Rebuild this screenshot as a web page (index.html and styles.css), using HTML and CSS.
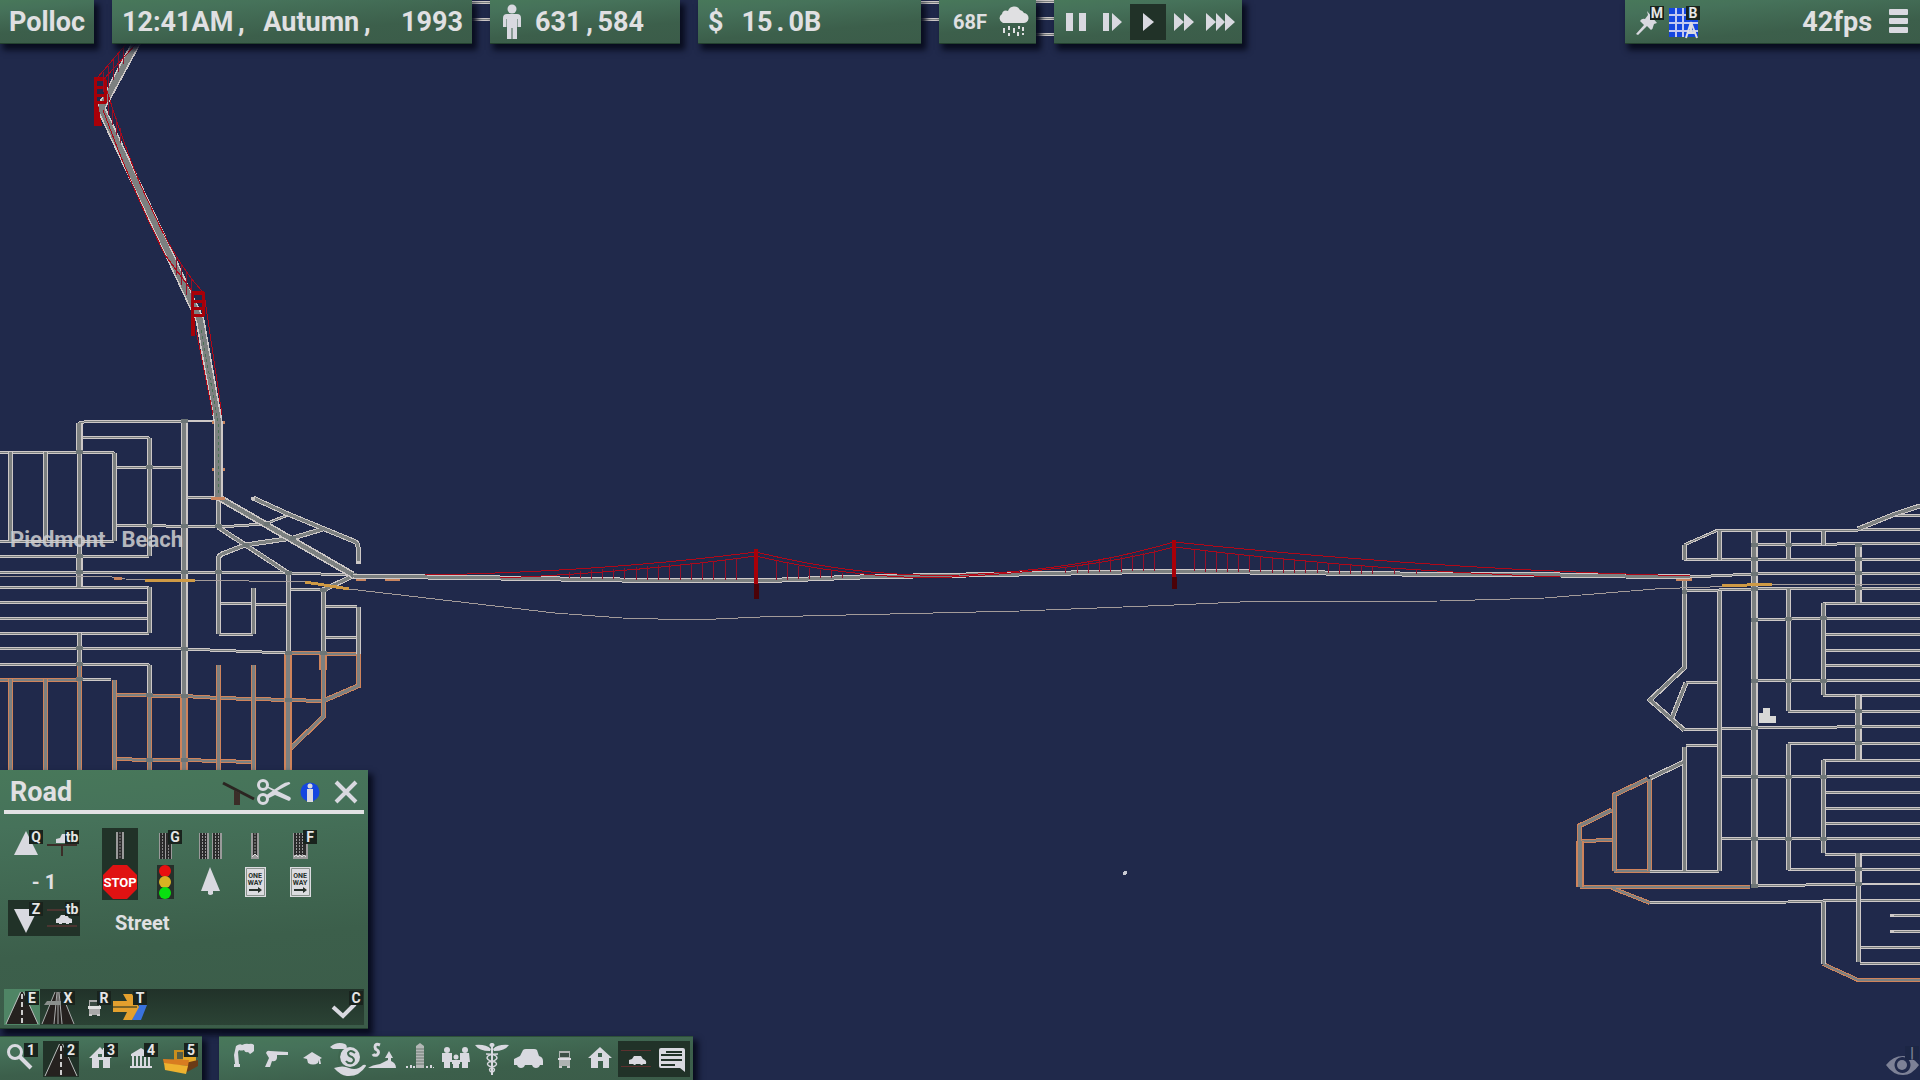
FILE: index.html
```html
<!DOCTYPE html>
<html lang="en">
<head>
<meta charset="utf-8">
<title>Polloc</title>
<link rel="stylesheet" href="styles.css">
</head>
<body>
<svg class="map" viewBox="0 0 1920 1080" preserveAspectRatio="xMidYMid slice" aria-hidden="true">
  <defs>
    <!-- east-west streets -->
    <path id="rows" d="M79 424Q79 422 84 422L184 421H218 M79 437H146Q149 437 149 440 M0 452H111Q114 452 114 455 M114 467H184 M184 497H218 M114 525L218 527L265 524L288 515 M0 541H114 M0 556H149 M0 572H184L288 573L353 575H380 M0 587H149 M0 602H149 M0 618H149 M0 633H149 M0 648L184 649L288 653 M0 664H146Q149 664 149 667 M79 679H111 M219 603L288 605 M219 634H253 M288 589L323 590 M323 606L357 607 M323 637L357 638
      M1684 545L1718 530H1858L1920 529 M1754 545L1920 543 M1684 560L1920 559 M1690 577L1754 574L1920 573 M1684 591L1754 589L1920 588 M1823 604L1920 603 M1754 620L1823 618H1920 M1823 634H1920 M1823 650H1920 M1823 665H1920 M1754 681L1920 680 M1823 695H1920 M1788 711H1920 M1684 730L1754 728L1920 726 M1788 744L1920 743 M1686 683L1719 682 M1686 746L1719 745 M1895 515H1920
      M1823 760H1920 M1719 777L1920 776 M1823 792H1920 M1823 808H1920 M1823 823H1920 M1719 839L1920 838 M1825 854H1920 M1788 870L1920 869 M1754 886L1858 884H1920 M1650 903L1788 902L1858 900H1920 M1892 915H1920 M1892 931H1920 M1858 947H1920 M1860 963H1920 M1650 871H1719
      M466 2H500 M466 19H500 M915 2H945 M915 19H945 M1030 1H1060 M1030 18H1060 M1030 34H1060"/>
    <!-- north-south streets -->
    <path id="cols" d="M10 452V541 M45 452V541 M79 423V587 M79 633V664 M114 453V541 M149 438V556 M149 587V633 M149 665V695 M218 497V527 M218 634V560Q218 556 222 554L245 545L293 538L323 529 M253 588V634 M288 573V653 M323 590V653 M358 607V654 M253 498L288 514L356 542Q358 544 358 547V562 M353 576L323 590 M218 527L288 573
      M1684 560V545 M1684 577V668L1650 700L1684 730 M1686 683L1672 718 M1719 531V560 M1719 591V871 M1788 531V559 M1788 589V711 M1823 531V545 M1823 603V695 M1684 747V871 M1788 744V870 M1823 760V853 M1858 853V962 M1823 902V964 M1858 529L1895 514L1920 506 M1684 762L1650 778"/>
    <path id="avenues" d="M184 421V695 M1754 531V886 M1858 545V603 M1858 695V760 M1858 853V886 M218 497L353 575 M79 423V452 M79 556V587"/>
    <path id="hot" d="M10 664V770 M45 664V770 M79 664V770 M114 680V770 M149 695V770 M218 665V770 M253 665V770 M323 653V717L291 748 M358 654V686L323 701 M1649 779V871 M1648 779L1614 795V871 M1612 810L1579 826V841"/>
    <path id="hot-rows" d="M0 680H80 M114 695L184 696L218 698L253 699L323 701 M114 759L150 760H184L253 762 M288 653L358 654 M1579 841L1614 840 M1614 871H1650 M1580 887H1750 M1612 888L1650 903 M1823 964L1858 980H1920"/>
    <path id="hot-avenues" d="M184 696V770 M288 653V770 M323 655V670 M1580 841V887"/>
    <path id="deck" d="M353 576L500 578L620 580L756 581L860 577L1020 574L1174 571L1400 574L1560 575L1690 577"/>
    <path id="span" d="M140 36L101 108L200 320L218 421V497"/>
    <clipPath id="south"><path d="M0 679H400V1080H0zM1500 0H1920V1080H1500zM200 640H400V680H200zM60 664H90V680H60z"/></clipPath>
  </defs>

  <use href="#hot-rows" class="edge-hot w4"/><use href="#hot-rows" class="core w2"/>
  <g clip-path="url(#south)"><use href="#hot" class="edge-hot w5"/><use href="#hot" class="core w3"/></g>
  <use href="#hot-avenues" class="edge-hot w8"/><use href="#hot-avenues" class="core w4"/>
  <use href="#rows" class="edge w3"/><use href="#rows" class="core w1"/>
  <use href="#cols" class="edge w5"/><use href="#cols" class="core w3"/>
  <use href="#avenues" class="edge w7"/><use href="#avenues" class="core w4"/>
  <path class="joint" d="M76 452h7M76 556h7M76 572h7M76 648h7M76 664h7M76 679h7M146 467h7M146 526h7M146 695h7M181 421h7M181 526h7M181 572h7M181 649h7M181 696h7M181 760h7M146 760h7M215 526h7M215 572h7M285 573h7M285 653h7M285 700h7M320 590h7M320 653h7M243 545h6M290 538h6M264 524h6M351 575h6M1751 545h7M1751 559h7M1751 574h7M1751 589h7M1751 620h7M1751 681h7M1751 728h7M1751 777h7M1751 839h7M1751 886h7M1785 545h7M1785 619h7M1785 681h7M1785 777h7M1785 839h7M1820 618h7M1820 681h7M1820 777h7M1820 839h7M1855 545h7M1855 559h7M1855 573h7M1855 588h7M1855 711h7M1855 727h7M1855 743h7M1855 869h7M1855 884h7M1682 592h5"/>
  <path class="edge w3" d="M251 498h4 M356 562h5 M1890 915h4 M1890 931h4"/>

  <!-- rail line and stations -->
  <path class="rail" d="M0 576H105L125 579L310 582L349 589L555 613L622 618L694 620L760 617L1020 611L1174 605L1240 602L1440 601L1545 598L1655 589L1680 588L1770 585L1920 584"/>
  <path class="station" d="M145 580H195 M305 582L349 589 M1722 586L1772 584"/>
  <path class="pad" d="M212 422H225 M212 469H225 M211 498H225 M356 579H366 M385 579H400 M114 578H122 M1676 579H1692"/>

  <!-- northern bridge -->
  <use href="#span" class="edge w9"/><use href="#span" class="core w6"/>
  <path class="stripe" d="M201 330L218 421V495"/>
  <rect class="tower" x="94" y="77" width="12" height="4"/>
  <path class="truss" d="M95 79V125 M105 80V103 M94 87H106 M94 95H106 M94 102H106 M192 292V335 M203 292V316 M192 301H204 M192 308H204 M192 315H204"/>
  <path class="tower" d="M94 104h4l4 22h-8zM191 291h13v4h-13zM191 318h4v18h-4z"/>
  <path class="cable" d="M98 77L128 42 M103 80L136 44 M107 91Q132 170 150 205Q175 262 202 291 M103 110Q130 185 165 255L192 291 M205 300L222 415 M196 330L213 415"/>
  <path class="hanger" d="M103 72V92M108 66V88M113 60V80M118 54V72M123 48V64M108 97V115M112 107V125M116 118V135M120 128V143M176 258V275M181 265V285M186 272V295M191 278V300"/>

  <!-- long crossing -->
  <use href="#deck" class="edge w5"/><use href="#deck" class="core w3"/>
  <path class="cable" d="M425 575Q600 572 756 552Q860 578 960 575Q1080 570 1174 542Q1440 570 1690 576 M500 578Q640 572 756 556Q840 576 930 578Q1080 572 1174 547Q1360 570 1560 577"/>
  <path class="hanger" d="M569 572V578M580 571V578M591 570V579M602 569V579M613 569V579M624 568V579M636 567V580M647 566V580M658 565V580M669 564V580M680 564V580M691 563V580M702 562V580M713 561V580M725 559V580M736 558V580M776 561V580M787 563V580M798 566V579M809 568V579M820 570V578M831 571V578M842 573V578M1065 567V573M1077 565V573M1088 562V573M1099 560V572M1110 558V572M1121 557V572M1132 555V571M1143 553V571M1154 550V571M1194 550V571M1205 551V572M1216 552V572M1227 553V572M1238 554V572M1249 556V572M1260 557V572M1272 558V573M1283 559V573M1294 560V573M1305 561V573M1317 562V573M1328 563V573M1339 564V574M1350 565V574M1361 566V574M1372 567V574M1394 569V574M1416 570V574"/>
  <path class="tower" d="M754 549h4v35h-4zM1172 540h4v40h-4z"/>
  <path class="pier" d="M754 584h5v15h-5zM1172 577h5v12h-5z"/>

  <path class="block" d="M1763 708h7v8h6v7h-17v-10h4z"/>
  <circle class="dot" cx="1125" cy="873" r="2"/>
</svg>

<div class="hud">
  <header class="topbar">
    <div class="plate city">Polloc</div>
    <div class="plate date"><span>12:41AM<span class="mark">,</span></span><span>Autumn<span class="mark">,</span></span><span class="year">1993</span></div>
    <div class="plate people">
      <svg class="person" viewBox="0 0 20 36" aria-hidden="true"><circle cx="10" cy="5" r="4.500"/><path d="M5 10h10q4 0 4 4v9h-3.500v-8h-.500v20h-4.500V24h-1v11H5V15h-.500v8H1v-9q0-4 4-4z"/></svg>
      <span>631<span class="mark">,</span>584</span>
    </div>
    <div class="plate money"><span>$</span><span>15<span class="mark">.</span>0B</span></div>
    <div class="plate weather">
      <span>68F</span>
      <svg class="icon" viewBox="0 0 36 36" aria-hidden="true"><path d="M7 19a5 5 0 0 1-1-9a4 4 0 0 1 6-3a6.500 6.500 0 0 1 12-1a6 6 0 0 1 4 3a5 5 0 0 1-1 10z"/><path d="M8 24v5M13 22v4M13 29v3M18 24v5M23 22v3M22 28v4M27 23v4M27 29v2" stroke="currentColor" stroke-width="2"/></svg>
    </div>
    <div class="plate speed">
      <button class="tool" aria-label="Pause"><svg viewBox="0 0 36 36"><path d="M8 9h7v18H8zM21 9h7v18h-7z"/></svg></button>
      <button class="tool" aria-label="Slow"><svg viewBox="0 0 36 36"><path d="M9 9h6v18H9zM18 9l10 9l-10 9z"/></svg></button>
      <button class="tool on" aria-label="Play"><svg viewBox="0 0 36 36"><path d="M13 9l11 9l-11 9z"/></svg></button>
      <button class="tool" aria-label="Fast"><svg viewBox="0 0 36 36"><path d="M8 9l10 9l-10 9zM18 9l10 9l-10 9z"/></svg></button>
      <button class="tool" aria-label="Fastest"><svg viewBox="0 0 36 36"><path d="M4 9l10 9l-10 9zM14 9l9 9l-9 9zM23 9l10 9l-10 9z"/></svg></button>
    </div>
    <div class="plate system">
      <button class="tool" aria-label="Pin"><svg viewBox="0 0 36 36"><path d="M18 7l10 12l-3 1l-1 3q0 2-2 3l-4-4l-9 9l-2-1l8-9l-4-4q2-3 5-2l3-4z"/></svg><kbd>M</kbd></button>
      <button class="tool" aria-label="Blueprint"><svg viewBox="0 0 36 36"><path fill="#1546e0" d="M4 4h29v29H4z"/><path fill="none" stroke="#c3c8f0" stroke-width="2" d="M4 11h29M4 19h29M4 27h29M11 4v29M18 4v29"/><path fill="none" stroke="#dcdce2" stroke-width="2" d="M26 18l-5 16M26 18l6 16M22 29h9M26 18v10"/></svg><kbd>B</kbd></button>
      <span class="fps">42fps</span>
      <button class="tool" aria-label="Menu"><svg viewBox="0 0 36 36"><rect x="9" y="5" width="19" height="6" rx="1"/><rect x="9" y="14" width="19" height="6" rx="1"/><rect x="9" y="23" width="19" height="6" rx="1"/></svg></button>
    </div>
  </header>

  <main class="field"><span class="district"><span>Piedmont</span><span>Beach</span></span></main>

  <section class="plate panel" aria-label="Road">
    <div class="title">
      <h1>Road</h1>
      <button class="tool" aria-label="Supports"><svg viewBox="0 0 36 36"><path fill="none" stroke="#2b2521" stroke-width="3" d="M3 9l31 16"/><path fill="#3b2d28" d="M14 16l6 3v12h-6z"/></svg></button>
      <button class="tool" aria-label="Cut"><svg viewBox="0 0 36 36"><g fill="none" stroke="currentColor" stroke-width="3"><circle cx="7" cy="11" r="4.500"/><circle cx="7" cy="25" r="4.500"/></g><path d="M10 13l9 5l15-8q1-1-1-2q-4 0-8 3L9 22l2 3l8-4l14 6q3-2 1-4L11 12z"/></svg></button>
      <button class="tool" aria-label="Info"><svg viewBox="0 0 36 36"><circle cx="18" cy="18" r="9.500" fill="#1546e0"/><circle cx="18" cy="12" r="2.500"/><path d="M15 15h6v13h-6z"/></svg></button>
      <button class="tool" aria-label="Close"><svg viewBox="0 0 36 36"><path fill="none" stroke="currentColor" stroke-width="4" d="M8 8l20 20M28 8L8 28"/></svg></button>
    </div>

    <div class="options">
      <div class="depth">
        <button class="pair" aria-label="Raise">
          <span class="cell"><svg viewBox="0 0 36 36"><path d="M18 3l12 24H6z"/></svg><kbd>Q</kbd></span>
          <span class="cell"><svg viewBox="0 0 36 36"><path fill="#3b2d28" d="M3 16h30v2H3zM17 18h2v10h-2z"/><path d="M12 15v-4l4-1l2-4h9l3 9z"/></svg><kbd>tb</kbd></span>
        </button>
        <output class="level">- 1</output>
        <button class="pair on" aria-label="Lower">
          <span class="cell"><svg viewBox="0 0 36 36"><path d="M18 33l12-24H6z"/></svg><kbd>Z</kbd></span>
          <span class="cell"><svg viewBox="0 0 36 36"><path fill="#4b3531" d="M3 9h30v2H3zM3 25h30v2H3z"/><path d="M12 23v-4l3-1l2-3h6l2 3l3 1v4h-3v1h-3v-1h-4v1h-3v-1z"/></svg><kbd>tb</kbd></span>
        </button>
      </div>
      <div class="types">
        <div class="grid">
          <button class="tool on" aria-label="Street"><svg viewBox="0 0 36 36"><path fill="#9a9a9a" d="M14 4h8v27h-8z"/><path fill="#2b2b2b" d="M16 4h4v27h-4z"/><path stroke="#888" stroke-dasharray="2 1" d="M18 4v27"/></svg></button>
          <button class="tool" aria-label="Avenue"><svg viewBox="0 0 36 36"><path fill="#9a9a9a" d="M12 5h13v26H12z"/><path fill="#2b2b2b" d="M13 5h5v26h-5zM19 5h5v26h-5z"/><path stroke="#888" stroke-dasharray="2 1" d="M15.500 5v26M21.500 5v26"/></svg><kbd>G</kbd></button>
          <button class="tool" aria-label="Highway"><svg viewBox="0 0 36 36"><path fill="#9a9a9a" d="M7 5h10v26H7zM20 5h10v26H20z"/><path fill="#2b2b2b" d="M8 5h7v26H8zM21 5h7v26h-7z"/><path stroke="#999" stroke-dasharray="2 1" d="M10.500 5v26M13.500 5v26M23.500 5v26M26.500 5v26"/></svg></button>
          <button class="tool" aria-label="One-way street"><svg viewBox="0 0 36 36"><path fill="#9a9a9a" d="M14 5h8v26h-8z"/><path fill="#2b2b2b" d="M16 5h4v22h-4z"/><path stroke="#999" stroke-dasharray="2 1" d="M18 5v20"/><path fill="none" stroke="#ddd" d="M15 29l3-3l3 3"/></svg></button>
          <button class="tool" aria-label="One-way avenue"><svg viewBox="0 0 36 36"><path fill="#9a9a9a" d="M11 5h15v26H11z"/><path fill="#2b2b2b" d="M12 5h12v22H12z"/><path stroke="#999" stroke-dasharray="2 1" d="M14.500 5v22M17.500 5v22M20.500 5v22"/><path fill="none" stroke="#ddd" d="M12 29l2-2l2 2l2-2l2 2l2-2l2 2"/></svg><kbd>F</kbd></button>
          <button class="tool on" aria-label="Stop sign"><svg viewBox="0 0 36 36"><path fill="#e01212" d="M11 1h14l10 10v14L25 35H11L1 25V11z"/><text class="stop" x="18" y="23" text-anchor="middle">STOP</text></svg></button>
          <button class="tool" aria-label="Traffic light"><svg viewBox="0 0 36 36"><path fill="#26302a" d="M10 1h17v34H10z"/><circle cx="18" cy="7" r="6" fill="#e81010"/><circle cx="18" cy="18" r="6" fill="#d9b223"/><circle cx="18" cy="29" r="6" fill="#08e010"/></svg></button>
          <button class="tool" aria-label="Trees"><svg viewBox="0 0 36 36"><path d="M18 3l10 24h-7v3q-3 2-5 0v-3H9z"/></svg></button>
          <button class="tool" aria-label="One way forward"><svg viewBox="0 0 36 36"><path fill="#dcdce0" d="M8 3h21v30H8z"/><path fill="none" stroke="#8b938e" d="M9.500 4.500h18v27h-18z"/><text class="sign" x="18" y="14" text-anchor="middle">ONE</text><text class="sign" x="18" y="21" text-anchor="middle">WAY</text><path fill="#26302a" d="M12 25h9v-2l4 3l-4 3v-2h-9z"/></svg></button>
          <button class="tool" aria-label="One way backward"><svg viewBox="0 0 36 36"><path fill="#dcdce0" d="M8 3h21v30H8z"/><path fill="none" stroke="#8b938e" d="M9.500 4.500h18v27h-18z"/><text class="sign" x="18" y="14" text-anchor="middle">ONE</text><text class="sign" x="18" y="21" text-anchor="middle">WAY</text><path fill="#26302a" d="M12 25h9v-2l4 3l-4 3v-2h-9z"/></svg></button>
        </div>
        <p class="chosen">Street</p>
      </div>
    </div>

    <div class="tray">
      <button class="tool lit" aria-label="Roads"><svg viewBox="0 0 36 36"><path fill="#25211f" d="M17 3h2l15 32H2z"/><path fill="none" stroke="#b9bcbc" d="M16.500 3L2 35M19.500 3L34 35"/><path stroke="#ccc" stroke-width="2" stroke-dasharray="5 3" d="M18 5v30"/></svg><kbd>E</kbd></button>
      <button class="tool" aria-label="Overpasses"><svg viewBox="0 0 36 36"><path fill="#25211f" d="M15 3h6l13 32H2z"/><path fill="none" stroke="#aaadad" d="M15 3L2 35M21 3l13 32M17 3l-3 32M19 3l3 32M18 3v32"/><path fill="#8a8f8d" d="M7 12h24l3 4H4z"/></svg><kbd>X</kbd></button>
      <button class="tool" aria-label="Transit"><svg viewBox="0 0 36 36"><path fill="#aaa" d="M13 11h11v15H13z"/><path fill="#3a4a42" d="M14 13h9v4h-9z"/><path fill="#e2e2e2" d="M12 17h13v3H12z"/><path fill="#ccc" d="M13 25h3v2h-3zM21 25h3v2h-3z"/></svg><kbd>R</kbd></button>
      <button class="tool" aria-label="Train"><svg viewBox="0 0 36 36"><path fill="#3a72dd" d="M27 16h8L29 31h-9z"/><path fill="#e3a02e" d="M1 12h14L11 5h9l7 13l-7 13h-9l4-8H1z"/><path stroke="#7b6427" stroke-width="2" d="M1 18h24"/></svg><kbd>T</kbd></button>
      <button class="tool last" aria-label="Confirm"><svg viewBox="0 0 36 36"><path fill="none" stroke="currentColor" stroke-width="4" d="M5 18l10 9l12-12"/></svg><kbd>C</kbd></button>
    </div>
  </section>

  <footer class="bottombar">
    <nav class="plate modes" aria-label="Tools">
      <button class="tool" aria-label="Query"><svg viewBox="0 0 36 36"><circle cx="12" cy="11" r="6.500" fill="none" stroke="currentColor" stroke-width="3"/><path fill="none" stroke="currentColor" stroke-width="4" d="M17 16l11 11"/></svg><kbd>1</kbd></button>
      <button class="tool on" aria-label="Roads"><svg viewBox="0 0 36 36"><path fill="#25211f" d="M17 3h2l15 32H2z"/><path fill="none" stroke="#b9bcbc" d="M16.500 3L2 35M19.500 3L34 35"/><path stroke="#ccc" stroke-width="2" stroke-dasharray="5 3" d="M18 5v30"/></svg><kbd>2</kbd></button>
      <button class="tool" aria-label="Zones"><svg viewBox="0 0 36 36"><path fill-rule="evenodd" d="M6 17L17 6l3 3V7h3v5l6 5h-2v10h-7v-8h-4v8H9V17zM15 13h4v3h-4z"/></svg><kbd>3</kbd></button>
      <button class="tool" aria-label="Civic"><svg viewBox="0 0 36 36"><path d="M8 13L18 7l10 6v2H8zM9 15h2v10H9zM13 15h2v10h-2zM17 15h2v10h-2zM21 15h2v10h-2zM25 15h2v10h-2zM7 25h22v2H7z"/></svg><kbd>4</kbd></button>
      <button class="tool" aria-label="Bulldoze"><svg viewBox="0 0 36 36"><path fill="#c98e1d" d="M11 9h11v11H11z"/><path fill="#555d45" d="M14 11h6v7h-6z"/><path fill="#e5aa27" d="M20 16h13v7H20z"/><path fill="#6b3b17" d="M22 22l13-3v6l-11 6z"/><path fill="#d87c20" d="M0 18l26 1l-1 6L1 23z"/><path fill="#eeb22f" d="M1 22l24 3l-2 8L2 29z"/></svg><kbd>5</kbd></button>
    </nav>
    <nav class="plate overlays" aria-label="Overlays">
      <button class="tool" aria-label="Pollution"><svg viewBox="0 0 36 36"><path d="M12 14l2-9q4-3 6-1q4-2 7-1q3-1 5 1v6q-2 2-4 3l-2-2q-3 1-4-2q-3 1-5 0l-1 2l1 12h1v3h-6v-3h1z"/></svg></button>
      <button class="tool" aria-label="Crime"><svg viewBox="0 0 36 36"><path d="M8 12q1-3 4-2l18 1v3H19v3q-1 4-5 3l-2 6H7l4-9z"/></svg></button>
      <button class="tool" aria-label="Education"><svg viewBox="0 0 36 36"><path d="M9 17l9-6l10 6l-2 1l1 5h-2v-4l-1 3q-5 3-10 0l-1-4z"/></svg></button>
      <button class="tool" aria-label="Economy"><svg viewBox="0 0 36 36"><circle cx="20" cy="16" r="10"/><path d="M0 6q7-6 15-3q3 2 1 5H3zM4 27q9-3 15 0q8 3 14-3q3-1 3 1q-7 11-19 10q-7-1-13-8z"/><path fill="none" stroke="#3f664f" stroke-width="2" d="M25 12q-5-4-7 0q0 3 4 4q4 3 0 6q-4 1-6-2M11 9q-4 7 0 15"/></svg></button>
      <button class="tool" aria-label="Land value"><svg viewBox="0 0 36 36"><path fill="none" stroke="currentColor" stroke-width="3" d="M14 4q-5-2-5 2q0 2 2 3q3 2 0 5q-3 1-4-1"/><path d="M2 27q4-3 12-4l8-4v-2h-3l4-7l4 7h-2v3q5 2 5 7z"/></svg></button>
      <button class="tool" aria-label="Density"><svg viewBox="0 0 36 36"><path fill="#b3b8b6" d="M14 5l4-3l4 3v22h-8z"/><path stroke="#6e7a74" d="M14 8h8M14 11h8M14 14h8M14 17h8M14 20h8M14 23h8"/><path d="M4 25h2v2H4zM8 24h2v3H8zM11 25h2v2h-2zM24 25h2v2h-2zM28 24h2v3h-2zM31 26h1v1h-1z"/></svg></button>
      <button class="tool" aria-label="Population"><svg viewBox="0 0 36 36"><circle cx="9" cy="9" r="3"/><circle cx="27" cy="9" r="3"/><circle cx="18" cy="16" r="2.500"/><path d="M4 12h10v9h-2v6H6v-6H4zM22 12h9l1 9h-2v6h-6v-6h-2zM14 19h8v4h-1v4h-6v-4h-1z"/></svg></button>
      <button class="tool" aria-label="Health"><svg viewBox="0 0 36 36"><path d="M18 2a2 2 0 0 1 1 4v28h-2V6a2 2 0 0 1 1-4z"/><path d="M17 8q-5-5-16-4q4 6 15 6zM19 8q5-5 16-4q-4 6-15 6z"/><path fill="none" stroke="currentColor" stroke-width="1.500" d="M12 13q11 0 11 4q-1 3-8 4q-3 2 0 4q7 2 5 5l-3 2M24 13q-11 0-11 4q1 3 8 4q3 2 0 4q-7 2-5 5l3 2"/></svg></button>
      <button class="tool" aria-label="Traffic"><svg viewBox="0 0 36 36"><path d="M4 18l6-3l3-6q1-1 3-1h8q2 0 3 1l2 6q4 1 4 5v4h-3q-1 3-4 3t-4-3h-7q-1 3-4 3t-4-3H4z"/></svg></button>
      <button class="tool" aria-label="Buses"><svg viewBox="0 0 36 36"><path fill="#aeb3b1" d="M13 10h11v15H13z"/><path fill="#3b4f45" d="M14 12h9v4h-9z"/><path fill="#dcdce2" d="M12 17h13v2H12z"/><path fill="#ccc" d="M13 25h3v2h-3zM21 25h3v2h-3z"/></svg></button>
      <button class="tool" aria-label="Homes"><svg viewBox="0 0 36 36"><path fill-rule="evenodd" d="M6 17L18 6l12 11h-3v10h-6v-7h-5v7H9V17zM16 12h4v4h-4z"/></svg></button>
      <button class="tool on" aria-label="Underground"><svg viewBox="0 0 36 36"><path fill="#5d302e" d="M3 9h30v1H3zM3 25h30v1H3z"/><path d="M11 23v-4l3-1l2-3h7l2 3q4 1 3 5h-3q-1 2-3 0h-4q-1 2-3 0z"/></svg></button>
      <button class="tool on" aria-label="Labels"><svg viewBox="0 0 36 36"><path d="M7 7h22q2 0 2 2v22l-5-4H7q-2 0-2-2V9q0-2 2-2z"/><path stroke="#213228" stroke-width="2" d="M12 11h16M7 14h21M7 19h21M7 24h14"/></svg></button>
    </nav>
    <button class="tool look" aria-label="Hide interface"><svg viewBox="0 0 36 36"><path fill-rule="evenodd" d="M2 21q7-9 17-9q9 0 16 9q-7 10-16 10Q9 31 2 21zM18 13a8 8 0 1 0 1 0z"/><circle cx="18" cy="21" r="5"/></svg><kbd>|</kbd></button>
  </footer>
</div>
</body>
</html>
```
FILE: styles.css
```css
* { box-sizing: border-box; }

body {
  margin: 0;
  background: #20294b;
  color: #e0e0e2;
  font: 700 27px/36px Roboto, "Liberation Sans", sans-serif;
  overflow: hidden;
}

/* ---- map ---- */
.map { position: absolute; inset: 0; width: 100%; height: 100%; shape-rendering: crispEdges; }
.map path, .map use { fill: none; }
.edge { stroke: #cdc8c7; }
.edge-hot { stroke: #cf835b; }
.core { stroke: #7c8080; }
.w1 { stroke-width: 1px; }
.w2 { stroke-width: 2px; }
.w3 { stroke-width: 3px; }
.w4 { stroke-width: 4px; }
.w5 { stroke-width: 5px; }
.w6 { stroke-width: 6px; }
.w7 { stroke-width: 7px; }
.w8 { stroke-width: 8px; }
.w9 { stroke-width: 9px; }
.joint { stroke: #6d7576; stroke-width: 4px; }
.rail { stroke: #a39b9a; stroke-width: 1px; }
.station { stroke: #cf9a45; stroke-width: 3px; }
.pad { stroke: #c9855f; stroke-width: 3px; }
.stripe { stroke: #4b7256; stroke-dasharray: 3 3; }
.cable { stroke: #b00818; stroke-width: 1px; }
.hanger { stroke: #93102a; stroke-width: 1px; }
.truss { stroke: #a80008; stroke-width: 3px; }
.map .tower { fill: #a80008; }
.map .pier { fill: #4b0208; }
.map .block { fill: #d8d8d6; }
.dot { fill: #c8cad2; }

/* ---- frame ---- */
.hud { position: relative; display: flex; flex-direction: column; min-height: 100vh; }
.field { flex: 1; position: relative; }
.district {
  position: absolute;
  left: 10px;
  top: 66.5%;
  display: flex;
  gap: 16px;
  font-size: 22px;
  line-height: 26px;
  color: #cfcfd2;
  opacity: .85;
}

.plate {
  background: linear-gradient(175deg, #48785a 0%, #46725a 20%, #3c5f4b 65%, #3b5c49 100%);
  border-bottom: 1px solid #23402f;
  box-shadow: 4px 5px 6px 1px #080c1e;
}

.topbar, .bottombar { display: flex; gap: 18px; }
.topbar .plate { display: flex; align-items: center; height: 44px; padding: 0 4px; white-space: nowrap; }
.topbar .city { width: 94px; padding: 0 9px; overflow: hidden; }
.topbar .date { width: 360px; padding: 0 9px 0 10px; gap: 14px; }
.topbar .people { width: 190px; padding: 0 12px; gap: 13px; }
.topbar .money { width: 223px; padding: 0 10px; gap: 18px; }
.topbar .weather { width: 97px; padding: 0 4px 0 14px; justify-content: space-between; font-size: 20px; }
.topbar .system { width: 295px; margin-left: auto; }
.year { margin-left: auto; }
.mark { display: inline-block; width: 16px; text-align: center; }
.person { width: 20px; height: 36px; fill: #d9d9e0; }
.icon { width: 36px; height: 36px; fill: currentColor; }
.fps { margin-left: auto; padding-right: 8px; }

/* ---- buttons ---- */
button { border: 0; margin: 0; padding: 0; background: none; color: #d9d9e0; font: inherit; }
.tool, .cell { position: relative; display: block; flex: none; width: 36px; height: 36px; }
.tool svg, .cell svg { display: block; width: 36px; height: 36px; fill: currentColor; }
.on { background: #213228; }
.lit { background: #4f8565; }
kbd {
  position: absolute;
  top: 2px;
  right: 1px;
  min-width: 14px;
  height: 14px;
  background: #19231d;
  color: #e6e6e6;
  font: 700 14px/15px Roboto, "Liberation Sans", sans-serif;
  text-align: center;
}
.stop { font: 700 13px Roboto, sans-serif; fill: #fff; }
.sign { font: 700 7px Roboto, sans-serif; fill: #26302a; }

/* ---- road panel ---- */
.panel { width: 368px; min-height: 259px; margin-bottom: 7px; padding: 4px 4px 3px; display: flex; flex-direction: column; }
.title { display: flex; border-bottom: 4px solid #e2e2e4; height: 40px; }
.title h1 { flex: 1; margin: 0; padding-left: 6px; font: inherit; }
.options { display: flex; gap: 22px; padding: 14px 4px 0; flex: 1; }
.pair { display: flex; }
.level { display: block; font-size: 20px; text-align: center; }
.grid { display: grid; grid-template-columns: repeat(5, 36px); column-gap: 9px; }
.chosen { margin: 5px 0 0 13px; font-size: 20px; }
.tray { display: flex; background: linear-gradient(#213229, #2b4335); }
.tray .last { margin-left: auto; }

/* ---- bottom bars ---- */
.bottombar { gap: 17px; height: 44px; }
.bottombar .plate { display: flex; padding: 4px 3px; border: 0; border-top: 1px solid #2d5039; }
.modes { gap: 4px; }
.look { margin: 8px 0 0 auto; opacity: .5; }
.look kbd { background: #1a2440; }
```
